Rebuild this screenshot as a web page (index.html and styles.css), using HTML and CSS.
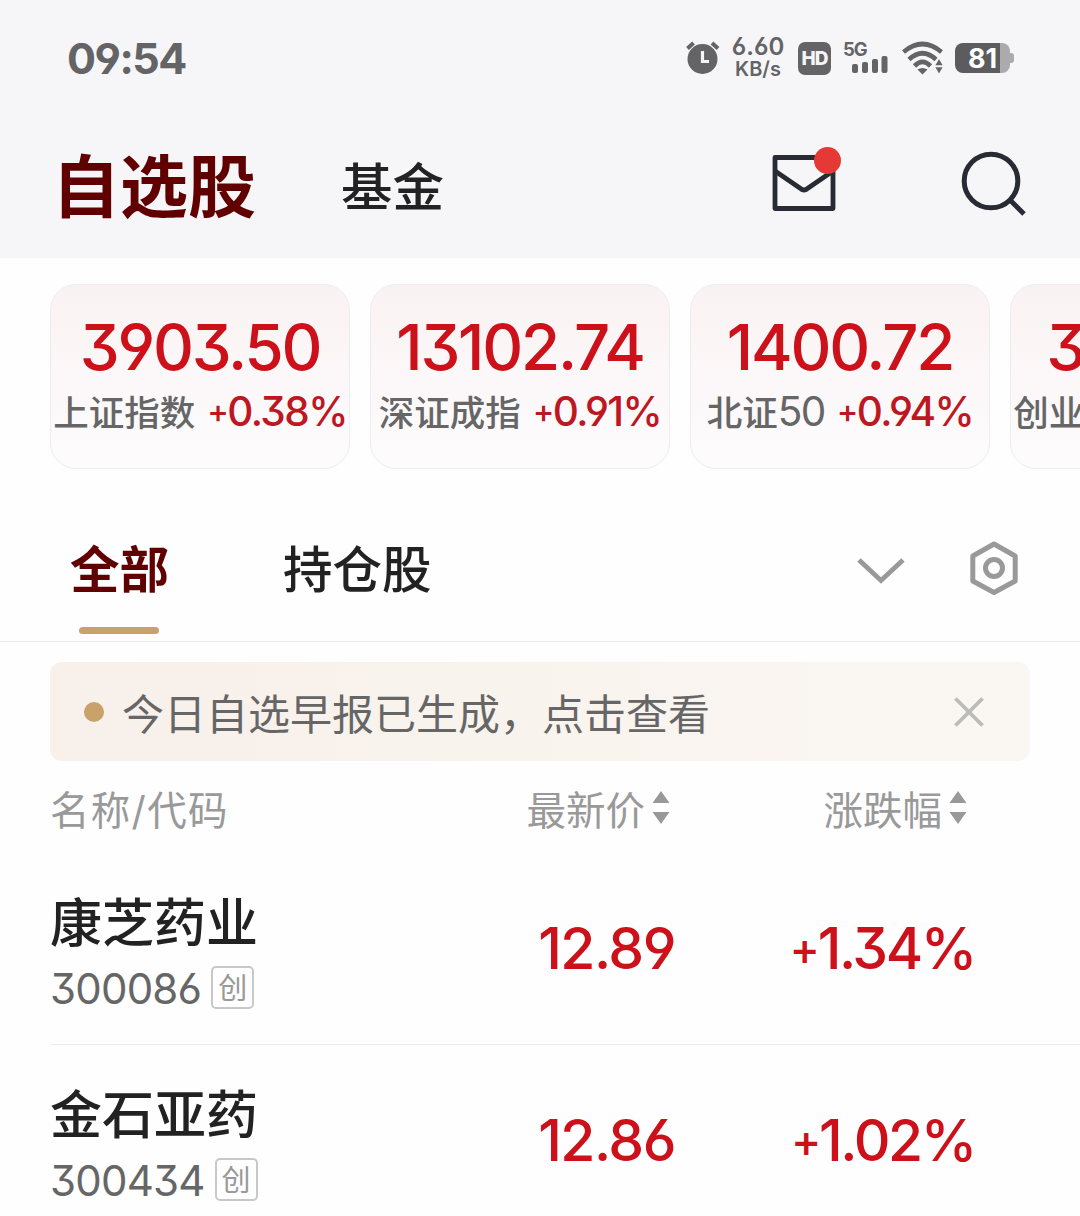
FILE: index.html
```html
<!DOCTYPE html>
<html lang="zh-CN">
  <head>
    <meta charset="UTF-8" />
    <meta name="viewport" content="width=device-width, initial-scale=1.0" />
    <title>自选股</title>
    <link rel="stylesheet" href="styles.css">
  </head>
  <body>
    <header class="top">
      <div class="status-bar">
        <span class="clock">09:54</span>
        <div class="status-icons">
          <svg class="alarm" width="34" height="34" viewBox="0 0 34 34">
            <circle cx="16.500" cy="18" r="15" fill="#646466" />
            <path d="M1.500 7.500L7.500 2M32 7.500L26 2" stroke="#646466" stroke-width="4" />
            <path d="M16.500 10V20.500H23" fill="none" stroke="#f6f6f9" stroke-width="3.200" />
          </svg>
          <div class="speed"><b>6.60</b><span>KB/s</span></div>
          <span class="hd">HD</span>
          <div class="signal">
            <span>5G</span>
            <svg width="36" height="17" viewBox="0 0 36 17" fill="#646466">
              <rect x="0" y="8" width="6" height="9" rx="2" />
              <rect x="10" y="6" width="6" height="11" rx="2" />
              <rect x="20" y="3" width="6" height="14" rx="2" />
              <rect x="29.500" y="0" width="6" height="17" rx="2" />
            </svg>
          </div>
          <svg class="wifi" width="42" height="34" viewBox="0 0 42 34">
            <g fill="none" stroke="#646466" stroke-width="4.600">
              <path d="M1.500 11Q20.500 -5 39.500 11" />
              <path d="M7 18.500Q20.500 6 34 18.500" />
              <path d="M12.500 25Q20.500 17 28.500 25" />
            </g>
            <path d="M15.500 28.500Q20.500 25.500 25.500 28.500L20.500 33.500Z" fill="#646466" />
            <path d="M37 16.500L42 25H32ZM37 34L42 25.500H32Z" fill="#646466" stroke="#f6f6f9" stroke-width="1.500" />
          </svg>
          <div class="battery"><span>81</span></div>
        </div>
      </div>
      <div class="title-bar">
        <h1>自选股</h1>
        <span class="fund">基金</span>
        <div class="title-actions">
          <a href="#" class="mail">
            <svg width="64" height="58" viewBox="0 0 64 58" fill="none" stroke="#282b34" stroke-width="4.800" stroke-linejoin="round">
              <rect x="3" y="3.500" width="58" height="51" />
              <path d="M3 17L30 35.500Q32 36.500 34 35.500L61 17" />
            </svg>
            <i class="dot"></i>
          </a>
          <a href="#" class="search">
            <svg width="66" height="66" viewBox="0 0 66 66" fill="none" stroke="#282b34" stroke-width="5">
              <circle cx="30" cy="31" r="26.800" />
              <path d="M49 50L63 64" />
            </svg>
          </a>
        </div>
      </div>
    </header>

    <section class="indexes">
      <div class="index-card">
        <strong>3903.50</strong>
        <p>上证指数 <em><i class="sign">+</i>0.38%</em></p>
      </div>
      <div class="index-card">
        <strong>13102.74</strong>
        <p>深证成指 <em><i class="sign">+</i>0.91%</em></p>
      </div>
      <div class="index-card">
        <strong>1400.72</strong>
        <p>北证<span class="num">50</span> <em><i class="sign">+</i>0.94%</em></p>
      </div>
      <div class="index-card">
        <strong>3122.03</strong>
        <p>创业板指 <em><i class="sign">+</i>0.38%</em></p>
      </div>
    </section>

    <nav class="tabs">
      <a href="#" class="tab active">全部</a>
      <a href="#" class="tab">持仓股</a>
      <div class="tab-tools">
        <svg class="chevron" width="48" height="28" viewBox="0 0 48 28" fill="none" stroke="#999" stroke-width="4.800">
          <path d="M2 3L24 23.500L46 3" />
        </svg>
        <svg width="50" height="56" viewBox="0 0 50 56" fill="none" stroke="#999" stroke-width="5" stroke-linejoin="round">
          <path d="M25 4L46.200 16V41L25 52.500L3.800 41V16Z" />
          <circle cx="25" cy="28" r="8.500" />
        </svg>
      </div>
    </nav>

    <div class="notice">
      <i class="bullet"></i>
      <span>今日自选早报已生成，点击查看</span>
      <svg width="30" height="30" viewBox="0 0 30 30" stroke="#bbb" stroke-width="3.800">
        <path d="M1.500 1.500L28.500 28.500M28.500 1.500L1.500 28.500" />
      </svg>
    </div>

    <div class="list-head">
      <span class="col-name">名称/代码</span>
      <span class="col-price">最新价
        <svg width="18" height="33" viewBox="0 0 18 33" fill="#999"><path d="M9 0L17.500 12H.5ZM9 33L17.500 21H.5Z" /></svg>
      </span>
      <span class="col-rate">涨跌幅
        <svg width="18" height="33" viewBox="0 0 18 33" fill="#999"><path d="M9 0L17.500 12H.5ZM9 33L17.500 21H.5Z" /></svg>
      </span>
    </div>

    <ul class="stocks">
      <li>
        <div class="col-name">
          <h2>康芝药业</h2>
          <div class="code">300086<span class="tag">创</span></div>
        </div>
        <span class="col-price">12.89</span>
        <span class="col-rate"><i class="sign">+</i>1.34%</span>
      </li>
      <li>
        <div class="col-name">
          <h2>金石亚药</h2>
          <div class="code">300434<span class="tag">创</span></div>
        </div>
        <span class="col-price">12.86</span>
        <span class="col-rate"><i class="sign">+</i>1.02%</span>
      </li>
    </ul>
  </body>
</html>
```
FILE: styles.css
```css
* {
  margin: 0;
  padding: 0;
  box-sizing: border-box;
}

body {
  width: 1080px;
  height: 1216px;
  overflow: hidden;
  background: #fefefe;
  color: #222;
  font-family: Inter, "Noto Sans CJK SC", sans-serif;
  /* open six and nine, flat-top three */
  font-feature-settings: "cv03", "cv04", "cv09";
}

a {
  color: inherit;
  text-decoration: none;
}
svg { display: block; flex: none; }
i, em { font-style: normal; }

/* header */
.top {
  height: 258px;
  background: #f6f6f9;
}
.status-bar {
  height: 116px;
  padding: 0 67px 0 67px;
  display: flex;
  align-items: center;
  justify-content: space-between;
  color: #646466;
}
.clock {
  font-size: 43px;
  font-weight: 700;
  letter-spacing: -1.5px;
}
.status-icons {
  display: flex;
  align-items: center;
}
.speed {
  width: 56px;
  margin-left: 10px;
  display: flex;
  flex-direction: column;
  align-items: center;
  line-height: 22px;
  font-size: 20px;
  font-weight: 600;
}
.speed b { font-size: 24px; font-weight: 600; }
.hd {
  width: 33px;
  height: 33px;
  margin-left: 12px;
  border-radius: 7px;
  background: #646466;
  color: #f6f6f9;
  font-size: 19px;
  font-weight: 800;
  line-height: 33px;
  letter-spacing: -1px;
  text-align: center;
}
.signal {
  width: 46px;
  height: 34px;
  margin-left: 12px;
}
.signal span {
  display: block;
  height: 15px;
  font-size: 18.5px;
  font-weight: 700;
  line-height: 16px;
  letter-spacing: -1px;
}
.signal svg { margin-left: 9px; }
.wifi { margin-left: 13px; }
.battery {
  position: relative;
  width: 55px;
  height: 30px;
  margin: 0 3px 0 11px;
  border-radius: 8px;
  background: linear-gradient(90deg, #5c5c5e 45px, #ababad 45px);
  color: #fff;
  font-size: 27px;
  font-weight: 700;
  line-height: 31px;
  text-align: center;
}
.battery::after {
  content: "";
  position: absolute;
  right: -4px;
  top: 10px;
  width: 4px;
  height: 10px;
  border-radius: 0 3px 3px 0;
  background: #ababad;
}
.title-bar {
  height: 134px;
  padding: 0 53px 0 52px;
  display: flex;
  align-items: center;
}
.title-bar h1 {
  margin-top: 8px;
  color: #600000;
  font-size: 68px;
  font-weight: 700;
  line-height: 134px;
}
.fund {
  margin-left: 85px;
  font-size: 51.5px;
  font-weight: 500;
}
.title-actions {
  margin-left: auto;
  display: flex;
  align-items: center;
  gap: 125px;
}
.mail { position: relative; }
.dot {
  position: absolute;
  top: -7px;
  right: -5px;
  width: 27px;
  height: 27px;
  border-radius: 50%;
  background: #e53935;
}

/* index cards */
.indexes {
  height: 236px;
  padding: 26px 0 0 50px;
  display: flex;
  gap: 20px;
  overflow: hidden;
}
.index-card {
  flex: none;
  width: 300px;
  height: 185px;
  padding-top: 29px;
  border: 1px solid #ededf1;
  border-radius: 26px;
  background: linear-gradient(#f9f2f3, #fcf7f8 50%, #fdfcfd);
  text-align: center;
  white-space: nowrap;
}
.index-card strong {
  display: block;
  color: #cd111b;
  font-size: 63.5px;
  font-weight: 500;
  line-height: 66px;
  letter-spacing: -2.2px;
}
.index-card p {
  display: flex;
  align-items: baseline;
  justify-content: center;
  gap: 12px;
  color: #666;
  font-size: 35.5px;
  font-weight: 500;
  line-height: 64px;
}
.index-card em,
.index-card .num {
  font-size: 40.5px;
  letter-spacing: -1.6px;
}
.index-card em { color: #bd1822; }
.index-card .num { margin-left: -12px; font-weight: 400; }
.sign {
  font-size: 0.8em;
  line-height: 1;
  vertical-align: 0.08em;
}

/* tabs */
.tabs {
  height: 148px;
  padding: 0 61px 0 70px;
  border-bottom: 1px solid #ebebeb;
  display: flex;
  align-items: center;
}
.tab {
  position: relative;
  height: 148px;
  font-size: 49.5px;
  font-weight: 500;
  line-height: 152px;
}
.tab + .tab { margin-left: 114px; }
.tab.active {
  color: #600000;
  font-weight: 700;
}
.tab.active::after {
  content: "";
  position: absolute;
  left: 9px;
  bottom: 8px;
  width: 80px;
  height: 7px;
  border-radius: 4px;
  background: #c9a26b;
}
.tab-tools {
  margin-left: auto;
  display: flex;
  align-items: center;
  gap: 64px;
}
.chevron { margin-top: 7px; }

/* morning report */
.notice {
  height: 99px;
  margin: 20px 50px 0;
  padding: 0 46px 0 34px;
  border-radius: 12px;
  background: linear-gradient(90deg, #f8f0ea, #faf7f2);
  display: flex;
  align-items: center;
  color: #666;
  font-size: 42px;
}
.bullet {
  width: 20px;
  height: 20px;
  margin-right: 18px;
  border-radius: 50%;
  background: #c9a26b;
}
.notice svg { margin-left: auto; }

/* stock list */
.list-head {
  height: 92px;
  padding-left: 50px;
  display: flex;
  align-items: center;
  color: #999;
  font-size: 39.5px;
}
.list-head .col-price,
.list-head .col-rate {
  display: flex;
  align-items: center;
  justify-content: flex-end;
  gap: 7px;
}
.col-name { width: 300px; }
.col-price { width: 325px; text-align: right; }
.col-rate { width: 300px; text-align: right; }
.list-head .col-name { letter-spacing: 1.3px; }
.list-head .col-price { width: 320px; }
.list-head .col-rate { width: 297px; }

.stocks { list-style: none; }
.stocks li {
  height: 192px;
  margin-left: 50px;
  border-bottom: 1px solid #ebebeb;
  display: flex;
  align-items: center;
}
.stocks h2 {
  padding-top: 9px;
  font-size: 52px;
  font-weight: 500;
  line-height: 69px;
}
.code {
  height: 60px;
  display: flex;
  align-items: center;
  gap: 10px;
  color: #666;
  font-size: 42px;
  letter-spacing: -0.8px;
  line-height: 60px;
  padding-top: 2px;
}
.tag {
  width: 43px;
  height: 43px;
  margin-top: -2px;
  border: 2px solid #c8c8c8;
  border-radius: 5px;
  color: #999;
  font-size: 29px;
  line-height: 41px;
  letter-spacing: 0;
  text-align: center;
}
.stocks .col-price,
.stocks .col-rate {
  color: #cd111b;
  font-size: 57px;
  font-weight: 500;
  letter-spacing: -1.5px;
}
.stocks .col-rate { letter-spacing: -2.4px; }
```
